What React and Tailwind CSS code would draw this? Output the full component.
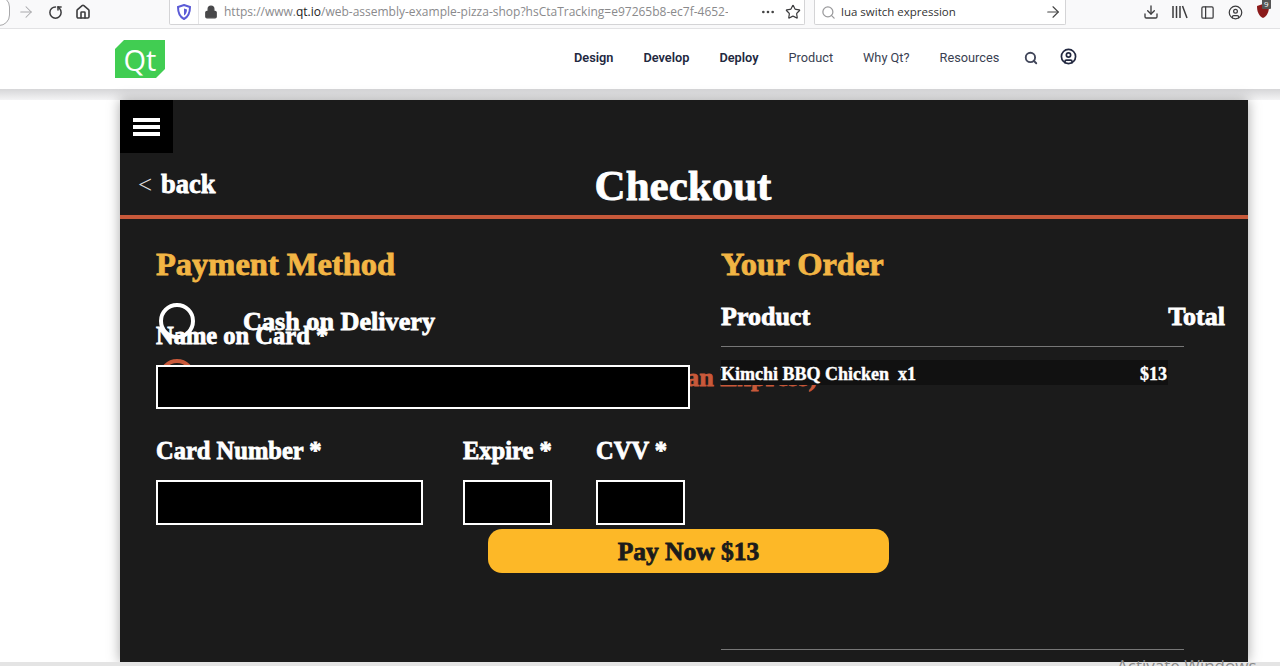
import { ArrowRight, RotateCw, Home, Lock, Star, Search, Download, PanelLeft, CircleUser, Ellipsis } from "lucide-react";

const serif = "font-['Liberation_Serif',serif] font-bold";
const fat = "[-webkit-text-stroke:0.8px_currentColor]";

function Toolbar() {
  return (
    <div className="h-[29px] bg-[#f9f9fa] border-b border-[#e2e2e4] flex items-start shrink-0 overflow-hidden">
      {/* back button, cut off by the crop */}
      <div className="w-[22px] h-[30px] -ml-[12px] -mt-[4px] rounded-full border border-[#a8a8aa] bg-white shrink-0" />
      <ArrowRight size={18} strokeWidth={1.4} className="ml-[7px] mt-[3px] text-[#a9a9ab] shrink-0" />
      <RotateCw size={15} strokeWidth={2.4} className="ml-[13px] mt-[5px] text-[#3c3c3e] shrink-0 -scale-x-100 rotate-90" />
      <Home size={16} strokeWidth={2.4} className="ml-[12px] mt-[4px] text-[#3c3c3e] shrink-0" />

      <div className="ml-[78px] w-[636px] h-[25px] bg-white border border-[#d4d4d6] border-t-0 rounded-b-[2px] flex items-center shrink-0 font-['Open_Sans',sans-serif] text-[12px]">
        <svg width="14" height="16" viewBox="0 0 14 16" className="ml-[7px] shrink-0">
          <path d="M7 1 L13 3 C13 9 11 13 7 15 C3 13 1 9 1 3 Z" fill="none" stroke="#5b5bd6" strokeWidth="2" />
          <path d="M7 4.5 L10 5.5 C10 8 9 10.5 7 11.5 Z" fill="#5b5bd6" />
        </svg>
        <div className="w-px h-[24px] bg-[#e4e4e6] ml-[7px]" />
        <Lock size={14} fill="#48484a" className="ml-[5px] text-[#48484a] shrink-0" />
        <span className="ml-[6px] w-[504px] overflow-hidden whitespace-nowrap text-[#8a8a8c]">
          https://www.<span className="text-[#222]">qt.io</span>/web-assembly-example-pizza-shop?hsCtaTracking=e97265b8-ec7f-4652-
        </span>
        <Ellipsis size={16} className="ml-[32px] text-[#444] shrink-0" />
        <Star size={16} strokeWidth={1.8} className="ml-[9px] text-[#3c3c3e] shrink-0" />
      </div>

      <div className="ml-[9px] w-[252px] h-[25px] bg-white border border-[#d4d4d6] border-t-0 rounded-b-[2px] flex items-center shrink-0 font-['Open_Sans',sans-serif] text-[11.5px] text-[#333]">
        <Search size={15} className="ml-[6px] text-[#9a9a9c] shrink-0" />
        <span className="ml-[5px] flex-1">lua switch expression</span>
        <ArrowRight size={18} strokeWidth={1.5} className="mr-[3px] text-[#444] shrink-0" />
      </div>

      <Download size={16} strokeWidth={2} className="ml-[77px] mt-[4px] text-[#3c3c3e] shrink-0" />
      <svg width="16" height="14" viewBox="0 0 16 14" fill="none" stroke="#3c3c3e" strokeWidth="1.5" className="ml-[13px] mt-[5px] shrink-0">
        <path d="M1 1V13M4.5 1V13M8 1V13M10.5 1L15 13" />
      </svg>
      <PanelLeft size={15} strokeWidth={2} className="ml-[12px] mt-[5px] text-[#3c3c3e] shrink-0" />
      <CircleUser size={15} strokeWidth={2} className="ml-[13px] mt-[5px] text-[#3c3c3e] shrink-0" />
      <div className="relative ml-[13px] mt-[3px] shrink-0">
        <svg width="14" height="16" viewBox="0 0 14 16">
          <path d="M7 1 L13 3 C13 9 11 13 7 15 C3 13 1 9 1 3 Z" fill="#8b1a1a" />
        </svg>
        <span className="absolute -top-[4px] left-[6px] bg-[#555] text-white text-[8px] leading-[10px] px-[2px] rounded-[1px] font-['Open_Sans',sans-serif]">9</span>
      </div>
    </div>
  );
}

function QtLogo() {
  return (
    <div className="w-[50px] h-[38px] bg-[#41cd52] text-white [clip-path:polygon(9px_0,100%_0,100%_29px,41px_100%,0_100%,0_9px)] flex items-center justify-center font-['Open_Sans',sans-serif] text-[29px] leading-none shrink-0">
      Qt
    </div>
  );
}

function SiteNav() {
  const links = [
    ["Design", true, "ml-0"],
    ["Develop", true, "ml-[30px]"],
    ["Deploy", true, "ml-[30px]"],
    ["Product", false, "ml-[30px]"],
    ["Why Qt?", false, "ml-[30px]"],
    ["Resources", false, "ml-[30px]"],
  ];
  return (
    <div className="h-[60px] bg-white flex items-center pl-[115px] shrink-0 pb-[3px]">
      <div className="mt-[3px]"><QtLogo /></div>
      <nav className="ml-[409px] flex items-center font-['Roboto',sans-serif] text-[12.75px] text-[#222840]">
        {links.map(([label, bold, gap]) => (
          <span key={label} className={`${gap} ${bold ? "font-semibold" : "font-normal text-[#3a3f52]"}`}>{label}</span>
        ))}
        <Search size={14} strokeWidth={3.2} className="ml-[25px] text-[#41465a]" />
        <CircleUser size={17} strokeWidth={2.4} className="ml-[22px] -mt-[2px] text-[#222840]" />
      </nav>
    </div>
  );
}

function Field({ label, inputClass, className }) {
  return (
    <div className={className}>
      <div className={`${serif} ${fat} text-[24.5px] leading-[30px] text-white whitespace-nowrap`}>{label}</div>
      <div className={`${inputClass} bg-black border-2 border-white`} />
    </div>
  );
}

function Radio({ label, tone, ring, labelClass, className }) {
  return (
    <div className={`flex items-center h-[40px] ${className}`}>
      <div className={`w-[36px] h-[36px] rounded-full border-[4px] ${ring} shrink-0 ml-[3px]`} />
      <span className={`${labelClass} ${serif} ${fat} text-[26.2px] leading-none whitespace-nowrap pt-[2px] ${tone}`}>{label}</span>
    </div>
  );
}

function PaymentColumn() {
  return (
    <div className="w-[565px] shrink-0 pl-[36px]">
      <h2 className={`${serif} ${fat} text-[32.5px] leading-[40px] text-[#f2b544] mt-[25px]`}>Payment Method</h2>
      <Radio className="mt-[17px]" labelClass="ml-[48px]" label="Cash on Delivery" tone="text-white" ring="border-white" />
      <Radio className="mt-[16px]" labelClass="ml-[256px]" label="Credit Card (American Express)" tone="text-[#c8593a]" ring="border-[#c8593a]" />

      {/* the card form sits over the radio rows, as in the page */}
      <div className="relative -mt-[76px]">
        <Field label="Name on Card *" inputClass="w-[534px] h-[44px] mt-[14px]" />
        <div className="flex mt-[27px]">
          <Field label="Card Number *" inputClass="w-[267px] h-[45px] mt-[14px]" />
          <Field label="Expire *" className="ml-[40px]" inputClass="w-[89px] h-[45px] mt-[14px]" />
          <Field label="CVV *" className="ml-[44px]" inputClass="w-[89px] h-[45px] mt-[14px]" />
        </div>
        <div className={`ml-[332px] mt-[4px] w-[401px] h-[44px] pt-[2px] rounded-[14px] bg-[#fdb827] flex items-center justify-center ${serif} ${fat} text-[25.5px] text-[#1b1b1b]`}>
          Pay Now $13
        </div>
      </div>
    </div>
  );
}

function OrderColumn() {
  return (
    <div className="flex-1 pl-[36px] flex flex-col">
      <h2 className={`${serif} ${fat} text-[32.5px] leading-[40px] text-[#f2b544] mt-[25px]`}>Your Order</h2>
      <div className={`flex justify-between mt-[18px] pr-[23px] ${serif} ${fat} text-[26px] leading-[30px] text-white`}>
        <span>Product</span>
        <span>Total</span>
      </div>
      <div className="w-[463px] h-px bg-[#777] mt-[14px]" />
      <div className={`w-[447px] h-[25px] mt-[13px] pt-[4px] bg-[#111] flex justify-between items-center ${serif} text-[18px] text-white [-webkit-text-stroke:0.4px_white]`}>
        <span className="whitespace-pre">Kimchi BBQ Chicken  x1</span>
        <span className="mr-[1px]">$13</span>
      </div>
      <div className="w-[463px] h-px bg-[#777] mt-[264px]" />
    </div>
  );
}

export default function App() {
  return (
    <div className="relative w-[1280px] h-[666px] overflow-hidden bg-white flex flex-col">
      <Toolbar />
      <SiteNav />
      <div className="h-[11px] bg-gradient-to-b from-[#d6d6d8] to-[#f4f4f5] shrink-0" />

      <div className="ml-[120px] w-[1128px] h-[562px] bg-[#1b1b1b] shadow-[0_0_12px_rgba(0,0,0,0.35)] shrink-0 flex flex-col">
        <button className="w-[53px] h-[53px] bg-black flex flex-col justify-center items-center gap-[3px] shrink-0">
          <span className="w-[27px] h-[4px] bg-white" />
          <span className="w-[27px] h-[4px] bg-white" />
          <span className="w-[27px] h-[4px] bg-white" />
        </button>

        <div className="h-[62px] flex items-center shrink-0 pt-[2px]">
          <span className="ml-[18px] font-['Liberation_Serif',serif] text-[25px] text-[#ddd]">&lt;</span>
          <span className={`ml-[9px] ${serif} ${fat} text-[26.5px] text-white`}>back</span>
          <h1 className={`ml-[379px] ${serif} ${fat} text-[43px] leading-none text-white`}>Checkout</h1>
        </div>
        <div className="h-[4px] bg-[#c8593a] shrink-0" />

        <div className="flex flex-1 min-h-0">
          <PaymentColumn />
          <OrderColumn />
        </div>
      </div>

      <div className="flex-1 bg-[#e4e4e4]" />
      <span className="absolute left-[1117px] top-[653px] font-['Open_Sans',sans-serif] text-[17px] text-[#8a8a8a] whitespace-nowrap">Activate Windows</span>
    </div>
  );
}
